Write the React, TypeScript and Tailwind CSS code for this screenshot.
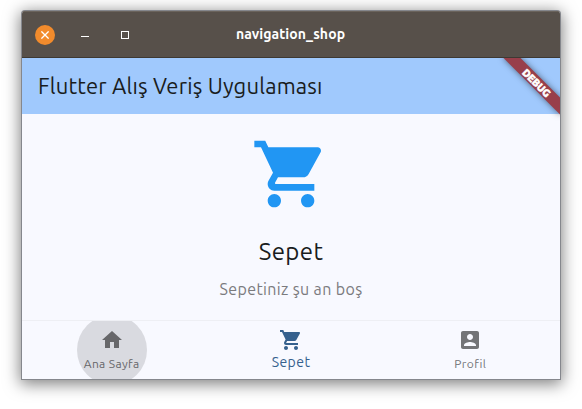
const CART =
  'M7 18c-1.1 0-1.99.9-1.99 2S5.9 22 7 22s2-.9 2-2-.9-2-2-2zM1 2v2h2l3.6 7.59-1.35 2.45c-.16.28-.25.61-.25.96 0 1.1.9 2 2 2h12v-2H7.42c-.14 0-.25-.11-.25-.25l.03-.12.9-1.63h7.45c.75 0 1.41-.41 1.75-1.03l3.58-6.49c.08-.14.12-.31.12-.48 0-.55-.45-1-1-1H5.21l-.94-2H1zm16 16c-1.1 0-1.99.9-1.99 2s.89 2 1.99 2 2-.9 2-2-.9-2-2-2z';
const HOME = 'M10 20v-6h4v6h5v-8h3L12 3 2 12h3v8z';
const ACCOUNT =
  'M3 5v14c0 1.1.89 2 2 2h14c1.1 0 2-.9 2-2V5c0-1.1-.9-2-2-2H5c-1.11 0-2 .9-2 2zm12 4c0 1.66-1.34 3-3 3s-3-1.34-3-3 1.34-3 3-3 3 1.34 3 3zm-9 8c0-2 4-3.1 6-3.1s6 1.1 6 3.1v1H6v-1z';

function Icon({ path, className }: { path: string; className: string }) {
  return (
    <svg viewBox="0 0 24 24" fill="currentColor" className={className}>
      <path d={path} />
    </svg>
  );
}

function TitleBar() {
  return (
    <header className="relative flex h-[47px] shrink-0 items-center border-t border-b border-t-[#6a635c] border-b-[#3e3933] bg-[#57504a] pl-[13px]">
      <button className="flex size-5 items-center justify-center rounded-full bg-[#f28b2c] text-white" aria-label="Close">
        <svg viewBox="0 0 8 8" className="size-2" stroke="currentColor" strokeWidth="1.3">
          <path d="M.4.4 7.6 7.6M7.6.4.4 7.6" />
        </svg>
      </button>
      <button className="ml-[26px] h-px w-2 translate-y-[2px] bg-white" aria-label="Minimize" />
      <button className="ml-8 size-2 border border-white" aria-label="Maximize" />
      <h1 className="absolute inset-x-0 top-[12px] pr-px text-center text-[14px] leading-5 font-bold tracking-[0.08px] text-white">
        navigation_shop
      </h1>
    </header>
  );
}

function AppBar() {
  return (
    <div className="relative flex h-14 shrink-0 items-center overflow-hidden bg-[#a0c9fd] pl-4">
      <h2 className="text-[22px] leading-7 tracking-[0.18px] whitespace-nowrap text-[#191c20]">Flutter Alış Veriş Uygulaması</h2>
    </div>
  );
}

function DebugBanner() {
  return (
    <div className="pointer-events-none absolute top-[47px] right-0 size-[70px] overflow-hidden">
      <div className="absolute top-[18px] left-[6px] h-3 w-[80px] rotate-45 bg-[#983f4b] pl-[2px] text-center text-[10.2px] leading-3 font-black text-white shadow-[0_0_6px_rgba(0,0,0,0.5)] [-webkit-text-stroke:0.6px_white]">
        DEBUG
      </div>
    </div>
  );
}

function Body() {
  return (
    <main className="flex min-h-0 flex-1 flex-col items-center pt-[20px]">
      <Icon path={CART} className="size-20 text-[#2196f3]" />
      <p className="mt-5 text-[24px] leading-9 tracking-[0.4px] text-[#191c20]">Sepet</p>
      <p className="mt-[7px] text-[16px] leading-6 tracking-[0.36px] text-[#7b7b7e]">Sepetiniz şu an boş</p>
    </main>
  );
}

function BottomNav() {
  return (
    <nav className="grid h-[59px] shrink-0 grid-cols-3 overflow-hidden border-t border-[#eeeff4]">
      <div className="relative flex flex-col items-center pt-[7px] text-[#67676a]">
        <div className="absolute top-[-6px] left-[54.7px] size-[70px] rounded-full bg-[#d9dae0]" />
        <Icon path={HOME} className="relative size-6" />
        <span className="relative mt-[4px] text-[12px] leading-4 tracking-[0.37px]">Ana Sayfa</span>
      </div>
      <div className="flex flex-col items-center pt-[7px] text-[#36618e]">
        <Icon path={CART} className="size-6" />
        <span className="mt-[2px] text-[14px] leading-4 tracking-[0.45px]">Sepet</span>
      </div>
      <div className="flex flex-col items-center pt-[7px] text-[#737477]">
        <Icon path={ACCOUNT} className="size-6" />
        <span className="mt-[4px] text-[12px] leading-4 tracking-[0.37px]">Profil</span>
      </div>
    </nav>
  );
}

export default function App() {
  return (
    <div className="h-[409px] w-[582px] overflow-hidden bg-white pt-[11px] pl-[22px] font-['Ubuntu','Noto_Sans',sans-serif]">
      <div className="relative flex h-[368px] w-[538px] flex-col overflow-hidden rounded-t-[3px] bg-[#f8f9ff] shadow-[0_0_0_1px_#85878d,0_3px_16px_2px_rgba(0,0,0,0.5)]">
        <TitleBar />
        <AppBar />
        <Body />
        <BottomNav />
        <DebugBanner />
      </div>
    </div>
  );
}
